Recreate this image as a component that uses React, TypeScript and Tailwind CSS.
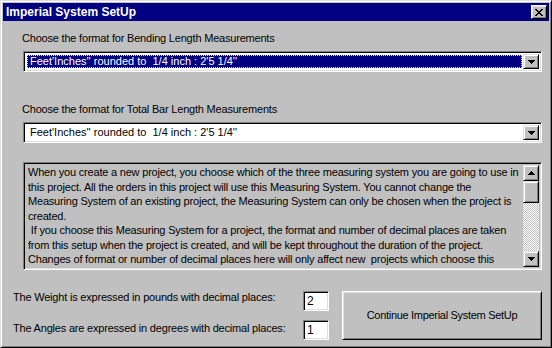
import React from 'react'

const raised =
  'border border-t-[#dfdfdf] border-l-[#dfdfdf] border-r-black border-b-black shadow-[inset_1px_1px_0_#ffffff,inset_-1px_-1px_0_#808080]'
const button =
  'border border-t-white border-l-white border-r-black border-b-black shadow-[inset_1px_1px_0_#dfdfdf,inset_-1px_-1px_0_#808080]'
const sunken =
  'border border-t-[#808080] border-l-[#808080] border-r-white border-b-white shadow-[inset_1px_1px_0_#000000,inset_-1px_-1px_0_#dfdfdf]'

const COMBO_TEXT = "Feet'Inches'' rounded to  1/4 inch : 2'5 1/4''"

const helpLines = [
  'When you create a new project, you choose which of the three measuring system you are going to use in',
  'this project. All the orders in this project will use this Measuring System. You cannot change the',
  'Measuring System of an existing project, the Measuring System can only be chosen when the project is',
  'created.',
  ' If you choose this Measuring System for a project, the format and number of decimal places are taken',
  'from this setup when the project is created, and will be kept throughout the duration of the project.',
  'Changes of format or number of decimal places here will only affect new  projects which choose this',
]

function Arrow({ up }: { up?: boolean }) {
  return (
    <svg width="7" height="4" viewBox="0 0 7 4" shapeRendering="crispEdges">
      {up ? (
        <path d="M3 0h1v1h1v1h1v1h1v1H0V3h1V2h1V1h1z" fill="#000" />
      ) : (
        <path d="M0 0h7v1H6v1H5v1H4v1H3V3H2V2H1V1H0z" fill="#000" />
      )}
    </svg>
  )
}

function CloseGlyph() {
  return (
    <svg width="8" height="7" viewBox="0 0 8 7" shapeRendering="crispEdges" fill="#000">
      <rect x="0" y="0" width="2" height="1" />
      <rect x="6" y="0" width="2" height="1" />
      <rect x="1" y="1" width="2" height="1" />
      <rect x="5" y="1" width="2" height="1" />
      <rect x="2" y="2" width="4" height="1" />
      <rect x="3" y="3" width="2" height="1" />
      <rect x="2" y="4" width="4" height="1" />
      <rect x="1" y="5" width="2" height="1" />
      <rect x="5" y="5" width="2" height="1" />
      <rect x="0" y="6" width="2" height="1" />
      <rect x="6" y="6" width="2" height="1" />
    </svg>
  )
}

function Combo({ selected }: { selected?: boolean }) {
  return (
    <div className={`ml-[20px] flex h-[21px] w-[519px] bg-white p-[2px] ${sunken}`}>
      <div className="flex flex-1 p-px">
        {selected ? (
          <div className="flex flex-1 items-center whitespace-pre border border-dotted border-[#ffff00] bg-[#000080] pl-[2px] text-white">
            {COMBO_TEXT}
          </div>
        ) : (
          <div className="flex flex-1 items-center whitespace-pre pl-[3px] text-black">{COMBO_TEXT}</div>
        )}
      </div>
      <div className={`flex w-[16px] items-center justify-center bg-[#c0c0c0] ${raised}`}>
        <Arrow />
      </div>
    </div>
  )
}

function ScrollBar() {
  return (
    <div className="flex w-[16px] flex-col">
      <div className={`flex h-[16px] items-center justify-center bg-[#c0c0c0] ${raised}`}>
        <Arrow up />
      </div>
      <div className={`h-[22px] bg-[#c0c0c0] ${raised}`} />
      <div className="flex-1 bg-[image:repeating-conic-gradient(#ffffff_0_25%,#c0c0c0_0_50%)] bg-[length:2px_2px]" />
      <div className={`flex h-[16px] items-center justify-center bg-[#c0c0c0] ${raised}`}>
        <Arrow />
      </div>
    </div>
  )
}

function NumberBox({ value }: { value: string }) {
  return (
    <div className={`flex h-[20px] w-[26px] shrink-0 items-center bg-white pl-[3px] text-[12px] text-black ${sunken}`}>
      {value}
    </div>
  )
}

export default function App() {
  return (
    <div className="h-[348px] w-[552px] bg-[#c0c0c0] font-['Liberation_Sans',Arial,sans-serif] text-[11px] text-black">
      <div className="flex h-full flex-col border border-t-[#dfdfdf] border-l-[#dfdfdf] border-r-black border-b-black p-[2px] shadow-[inset_1px_1px_0_#ffffff,inset_-1px_-1px_0_#808080]">
        {/* Title bar */}
        <div className="flex h-[18px] items-center justify-between bg-[#000080] pl-[3px] pr-[2px]">
          <span className="text-[12px] font-bold text-white">Imperial System SetUp</span>
          <div className={`flex h-[14px] w-[16px] items-center justify-center bg-[#c0c0c0] ${button}`}>
            <CloseGlyph />
          </div>
        </div>

        {/* Body */}
        <div className="flex flex-1 flex-col">
          <div className="ml-[19px] mt-[11px] leading-[13px] tracking-[-0.2px]">
            Choose the format for Bending Length Measurements
          </div>
          <div className="mt-[6px]">
            <Combo selected />
          </div>

          <div className="ml-[19px] mt-[31px] leading-[13px] tracking-[-0.2px]">
            Choose the format for Total Bar Length Measurements
          </div>
          <div className="mt-[6px]">
            <Combo />
          </div>

          <div className={`ml-[20px] mt-[19px] flex h-[108px] w-[519px] bg-[#c0c0c0] p-[2px] ${sunken}`}>
            <div className="flex-1 overflow-hidden pl-[2px] leading-[14.5px] tracking-[-0.2px]">
              {helpLines.map((line, i) => (
                <div key={i} className="whitespace-pre">
                  {line}
                </div>
              ))}
            </div>
            <ScrollBar />
          </div>

          {/* Bottom row */}
          <div className="ml-[10px] mt-[21px] flex">
            <div className="flex w-[316px] flex-col gap-[9px] tracking-[-0.2px]">
              <div className="flex h-[20px] items-center justify-between">
                <span className="-mt-[7px] whitespace-nowrap">The Weight is expressed in pounds with decimal places:</span>
                <NumberBox value="2" />
              </div>
              <div className="flex h-[20px] items-center justify-between">
                <span className="-mt-[3px] whitespace-nowrap">The Angles are expressed in degrees with decimal places:</span>
                <NumberBox value="1" />
              </div>
            </div>
            <div
              className={`ml-[13px] flex h-[49px] w-[200px] items-center justify-center bg-[#c0c0c0] tracking-[-0.3px] ${button}`}
            >
              Continue Imperial System SetUp
            </div>
          </div>
        </div>
      </div>
    </div>
  )
}
